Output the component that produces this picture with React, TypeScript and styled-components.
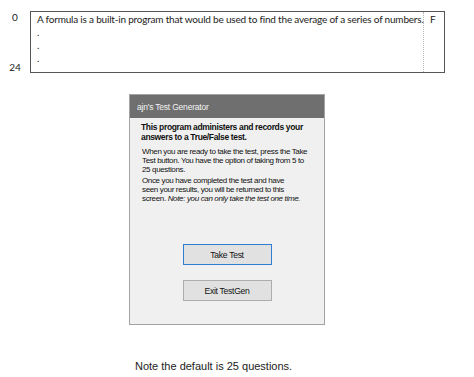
import styled, { createGlobalStyle } from 'styled-components';

const Global = createGlobalStyle`
body {
  margin: 0;
  background: #ffffff;
  font-family: "Liberation Sans", Arial, sans-serif;
}
`

const Page = styled.div`
width: 474px;
height: 377px;
overflow: hidden;
`
const Row = styled.div`
display: flex;
padding-top: 11px;
`
const Numbers = styled.div`
width: 30px;
height: 63px;
display: flex;
flex-direction: column;
justify-content: space-between;
align-items: center;
font-family: Lato, sans-serif;
font-size: 10px;
color: #222;
`
const Num = styled.span`
line-height: 13px;
`
const Box = styled.div`
width: 413px;
height: 60px;
border: 1px solid #555;
display: flex;
font-family: Lato, sans-serif;
font-size: 10px;
letter-spacing: -0.2px;
color: #222;
`
const Question = styled.div`
flex: 1;
min-width: 0;
padding: 1px 0 0 6px;
line-height: 13px;
white-space: nowrap;
`
const Answer = styled.div`
width: 14px;
padding: 1px 0 0 6px;
border-left: 1px dotted #b5b5b5;
line-height: 13px;
`
const Dialog = styled.div`
margin: 20px 0 0 129px;
width: 194px;
height: 229px;
border: 1px solid #a3a3a3;
background: #f0f0f0;
display: flex;
flex-direction: column;
`
const TitleBar = styled.div`
height: 23px;
background: #6f6f6f;
color: #f2f2f2;
font-size: 8.5px;
letter-spacing: -0.2px;
display: flex;
align-items: center;
padding-left: 7px;
`
const Body = styled.div`
padding: 5px 10px 0 11px;
font-size: 8px;
letter-spacing: -0.35px;
color: #111;
white-space: nowrap;
`
const Lead = styled.p`
margin: 0 0 5px;
font-weight: bold;
font-size: 8.5px;
letter-spacing: -0.35px;
line-height: 9.5px;
`
const Para = styled.p`
margin: 0 0 2px 1px;
line-height: 9px;
`
const Buttons = styled.div`
display: flex;
flex-direction: column;
align-items: center;
gap: 15px;
margin-top: 39px;
`
const Btn = styled.div<{ primary?: boolean }>`
width: 87px;
height: 19px;
border: 1px solid ${p => p.primary ? '#2c7fd3' : '#adadad'};
background: #e1e1e1;
font-size: 8.6px;
letter-spacing: -0.3px;
color: #111;
display: flex;
align-items: center;
justify-content: center;
`
const Note = styled.div`
margin: 35px 0 0 135px;
font-size: 11px;
color: #222;
`

export default function App() {
  return (
    <Page>
      <Global />
      <Row>
        <Numbers>
          <Num>0</Num>
          <Num>24</Num>
        </Numbers>
        <Box>
          <Question>
            A formula is a built-in program that would be used to find the average of a series of numbers.
            <br />.<br />.<br />.
          </Question>
          <Answer>F</Answer>
        </Box>
      </Row>
      <Dialog>
        <TitleBar>ajn's Test Generator</TitleBar>
        <Body>
          <Lead>This program administers and records your<br />answers to a True/False test.</Lead>
          <Para>When you are ready to take the test, press the Take<br />Test button. You have the option of taking from 5 to<br />25 questions.</Para>
          <Para>Once you have completed the test and have<br />seen your results, you will be returned to this<br />screen. <i>Note: you can only take the test one time.</i></Para>
        </Body>
        <Buttons>
          <Btn primary>Take Test</Btn>
          <Btn>Exit TestGen</Btn>
        </Buttons>
      </Dialog>
      <Note>Note the default is 25 questions.</Note>
    </Page>
  );
}
